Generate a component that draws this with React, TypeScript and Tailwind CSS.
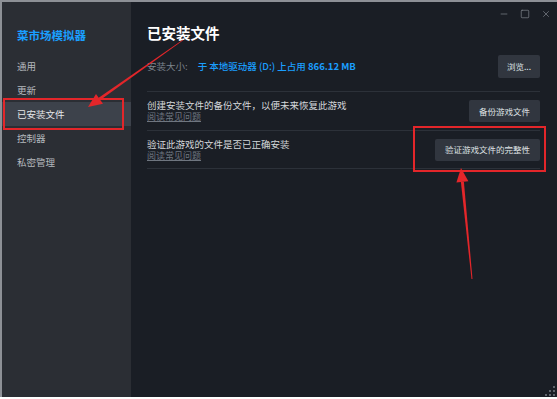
import { Minus, Square, X } from "lucide-react";

const navItems = ["通用", "更新", "已安装文件", "控制器", "私密管理"];

function Sidebar() {
  return (
    <div className="w-[129px] shrink-0 bg-[#2b2e34] pt-[24px]">
      <div className="pl-[15px] text-[11.5px] font-bold leading-[18px] text-[#1a9fff]">
        菜市场模拟器
      </div>
      <div className="mt-[10px] flex flex-col">
        {navItems.map((item) => (
          <div
            key={item}
            className={
              item === "已安装文件"
                ? "h-[24px] pl-[15px] flex items-center text-[9.5px] text-[#e6e8ea] bg-[#3d424b]"
                : "h-[24px] pl-[15px] flex items-center text-[9.5px] text-[#b4b8bd]"
            }
          >
            {item}
          </div>
        ))}
      </div>
    </div>
  );
}

function ActionButton({ label }: { label: string }) {
  return (
    <div className="h-[22px] px-[10px] flex items-center rounded-[2px] bg-[#31363f] text-[8.5px] text-[#dfe1e3]">
      {label}
    </div>
  );
}

function Row({ text, button, height }: { text: string; button: string; height: string }) {
  return (
    <div className={`${height} flex items-center justify-between border-b border-[#2c3139]`}>
      <div className="flex flex-col">
        <span className="text-[9.5px] leading-[12px] text-[#d4d7da]">{text}</span>
        <span className="text-[9px] leading-[12px] text-[#6f7680] underline">阅读常见问题</span>
      </div>
      <ActionButton label={button} />
    </div>
  );
}

function Main() {
  return (
    <div className="relative flex-1 bg-[#1a1e25] pl-[16px] pr-[17px] pt-[21px]">
      <div className="absolute right-[6px] top-[7px] flex items-center gap-[11px] text-[#8b9098]">
        <Minus size={10} strokeWidth={1.5} />
        <Square size={10} strokeWidth={1.5} />
        <X size={10} strokeWidth={1.5} />
      </div>
      <div className="h-[20px] text-[14.5px] font-bold leading-[20px] text-white">已安装文件</div>
      <div className="flex items-center justify-between pt-[12px] pb-[13px] border-b border-[#2c3139]">
        <div className="flex items-center text-[9.5px]">
          <span className="text-[#7d848d]">安装大小:</span>
          <span className="ml-[10px] font-medium text-[#1a9fff]">
            于 本地驱动器 (D:) 上占用 <span className="font-semibold">866.12 MB</span>
          </span>
        </div>
        <div className="h-[23px] px-[9px] flex items-center rounded-[2px] bg-[#31363f] text-[8.5px] text-[#dfe1e3]">
          浏览...
        </div>
      </div>
      <Row text="创建安装文件的备份文件，以便未来恢复此游戏" button="备份游戏文件" height="h-[39px]" />
      <Row text="验证此游戏的文件是否已正确安装" button="验证游戏文件的完整性" height="h-[38px]" />
      <div className="absolute right-[2px] bottom-[1px] grid grid-cols-3 gap-[2px]">
        <span className="w-[2px] h-[2px]" />
        <span className="w-[2px] h-[2px]" />
        <span className="w-[2px] h-[2px] bg-[#5f646c]" />
        <span className="w-[2px] h-[2px]" />
        <span className="w-[2px] h-[2px] bg-[#5f646c]" />
        <span className="w-[2px] h-[2px] bg-[#5f646c]" />
        <span className="w-[2px] h-[2px] bg-[#5f646c]" />
        <span className="w-[2px] h-[2px] bg-[#5f646c]" />
        <span className="w-[2px] h-[2px] bg-[#5f646c]" />
      </div>
    </div>
  );
}

export default function App() {
  return (
    <div className="relative w-[557px] h-[399px] overflow-hidden bg-white font-['Noto_Sans_CJK_SC','Noto_Sans',sans-serif]">
      <div className="flex h-[397px] border-t-2 border-l-2 border-[#8d9096]">
        <Sidebar />
        <Main />
      </div>

      {/* annotation overlays */}
      <div className="absolute left-[3px] top-[98px] w-[121px] h-[32px] border-2 border-[#e3262a]" />
      <div className="absolute left-[413px] top-[126px] w-[133px] h-[46px] border-2 border-[#e3262a]" />
      <svg className="absolute inset-0 pointer-events-none" width="557" height="399">
        <polygon points="183.2,40.3 182.8,39.7 98.7,97.8 100.3,100" fill="#e3262a" />
        <polygon points="88,107 96,94 103,103.8" fill="#e3262a" />
        <polygon points="472.5,279 471.5,279.1 460.9,182.1 463.9,181.8" fill="#e3262a" />
        <polygon points="461,168 468.4,181.3 456.4,182.5" fill="#e3262a" />
      </svg>
    </div>
  );
}
